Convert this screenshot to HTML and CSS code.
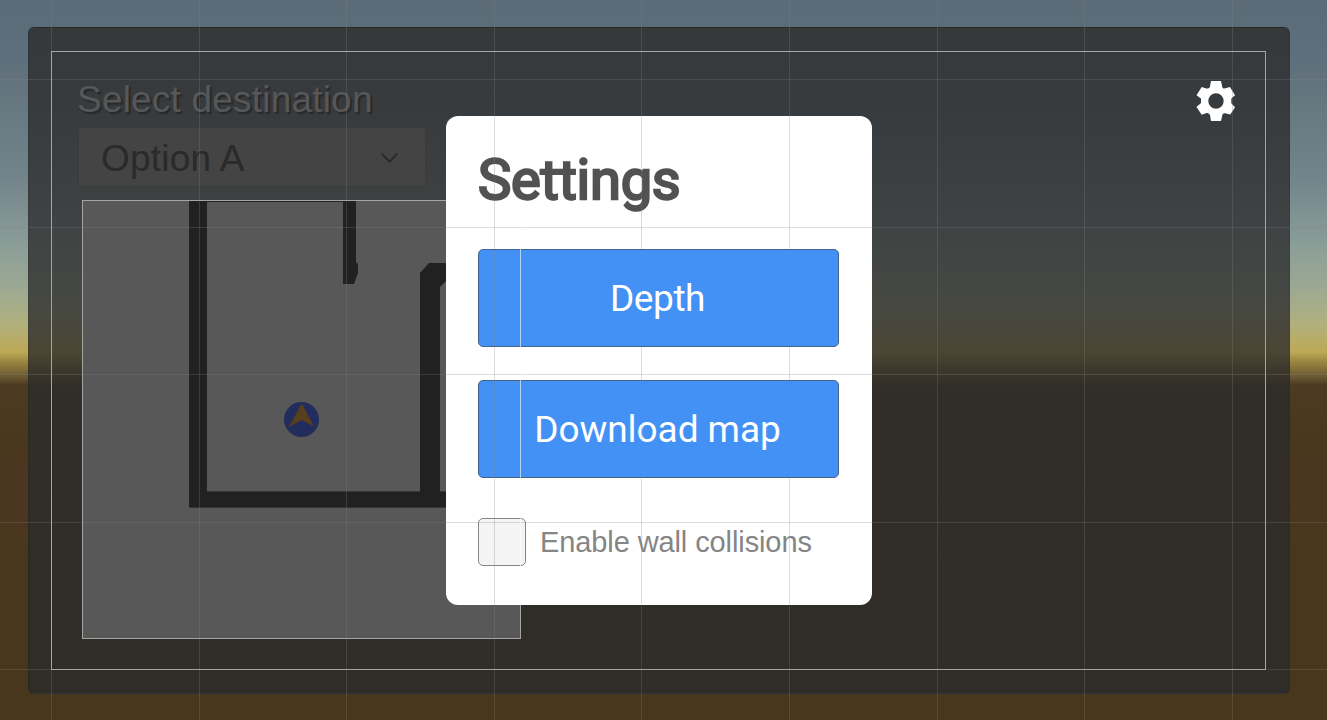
FILE: index.html
```
<!DOCTYPE html>
<html lang="en">
<head>
<meta charset="utf-8">
<title>Settings</title>
<link rel="stylesheet" href="styles.css">
</head>
<body>
<main class="scene">
  <section class="panel">
    <div class="destination">
      <h2 class="destination-label">Select destination</h2>
      <div class="dropdown">
        <span class="dropdown-value">Option A</span>
        <svg class="chevron" width="20" height="12" viewBox="0 0 20 12"><path d="M1.500 1.500 9.500 9.700 17.500 1.500" fill="none" stroke="#262626" stroke-width="1.700"/></svg>
      </div>
      <svg class="map" width="439" height="439" viewBox="0 0 439 439">
        <rect width="439" height="439" fill="#585858"/>
        <path fill="#212121" d="M107 1H274V62L276 64V73L272 84H261V2H125V291H338V73L347 63H439V81H364L358 87V291H439V308H107Z"/>
        <path d="M107 307.500H439M125 291.500H338M358 291.500H439" stroke="#363636" fill="none"/>
        <circle cx="219.500" cy="219.500" r="17.500" fill="#222d5d"/>
        <path fill="#58401f" d="M219.600 203.500 232 226.500 219.600 220 206.800 227Z"/>
        <rect x=".5" y=".5" width="438" height="438" fill="none" stroke="#a5a5a5"/>
      </svg>
    </div>
    <svg class="gear" width="40" height="42" viewBox="0 0 40 42">
      <path fill="#fff" fill-rule="evenodd" d="M15 1H25L26.300 7.300Q27 8.900 28.500 8.500L34 7 39 15.200 35.300 18.600V23.300L39 27.200 34.300 34.500 29 33.200Q27.500 32.800 26.500 34.600L25 41H15L14 35Q12.500 32.400 10.500 33L5.700 34.800.5 27 5 23V18.600L.5 15.200 5.700 7 9.500 8.200Q12.500 9.200 13.800 7.200ZM20 13.300A7.700 7.700 0 1 0 20 28.700 7.700 7.700 0 1 0 20 13.300Z"/>
    </svg>
  </section>

  <section class="dialog">
    <h1 class="dialog-title">Settings</h1>
    <button class="button">Depth</button>
    <button class="button button-wide-text">Download map</button>
    <label class="toggle"><span class="checkbox"></span><span class="toggle-label">Enable wall collisions</span></label>
  </section>

  <svg class="guides" width="1327" height="720" viewBox="0 0 1327 720">
    <path class="grid" d="M51.500 0V720M199.500 0V720M346.500 0V720M494.500 0V720M641.500 0V720M789.500 0V720M937.500 0V720M1084.500 0V720M1232.500 0V720M0 79.500H1327M0 227.500H1327M0 374.500H1327M0 522.500H1327M0 669.500H1327"/>
    <rect class="bounds" x="51.500" y="51.500" width="1214" height="618"/>
    <path class="edge" d="M520.500 227V605"/>
  </svg>
</main>
</body>
</html>
```
FILE: styles.css
```
* { box-sizing: border-box; }

body {
  margin: 0;
  font-family: "Liberation Sans", Arial, sans-serif;
}

.scene {
  position: relative;
  width: 1327px;
  height: 720px;
  padding: 27px 37px 26px 28px;
  overflow: hidden;
  background: linear-gradient(#5b6c78 0, #5d6e7c 50px, #65767f 100px, #73858b 180px, #8b9d98 245px, #9aa893 285px, #b0b080 322px, #bda955 352px, #9a853f 362px, #665532 378px, #4c3a22 385px, #49381d 440px, #4b361f 470px, #4b361f 510px, #48371d 550px, #48361d 720px);
}

.panel {
  display: flex;
  justify-content: space-between;
  width: 1262px;
  height: 667px;
  padding: 49px 53px 0 49px;
  border-radius: 6px;
  border: 1px solid rgba(30, 30, 30, .15);
  background: linear-gradient(#36393c 0, #383b3e 80px, #3c4041 160px, #414544 230px, #474840 285px, #4b4533 325px, #3e392c 340px, #312d27 360px, #312d29 450px, #302c26 530px, #302c27 667px);
}

.destination { width: 443px; }

.destination-label {
  height: 50px;
  margin: 0 0 0 -1px;
  font-size: 37px;
  font-weight: 400;
  line-height: 45px;
  letter-spacing: .2px;
  white-space: nowrap;
  color: #575757;
  text-shadow: 2px 2px 1px rgba(25, 25, 25, .55);
}

.dropdown {
  display: flex;
  align-items: center;
  justify-content: space-between;
  width: 348px;
  height: 60px;
  padding: 2px 25px 0 22px;
  border: 1px solid #3a3c3c;
  border-radius: 4px;
  background: #434443;
}

.dropdown-value {
  padding-top: 2px;
  font-size: 37px;
  line-height: 58px;
  letter-spacing: .2px;
  color: #2a2a2a;
}

.map {
  display: block;
  margin: 13px 0 0 4px;
}

.gear { margin-top: 3px; }

.dialog {
  position: absolute;
  left: 446px;
  top: 116px;
  width: 426px;
  height: 489px;
  padding: 32px 33px 39px 32px;
  border-radius: 12px;
  background: #fff;
}

.dialog-title {
  height: 101px;
  margin: 0;
  font: 400 56px/64px Roboto, sans-serif;
  letter-spacing: -.25px;
  color: #525252;
  -webkit-text-stroke: 2.4px #525252;
}

.button {
  display: flex;
  align-items: center;
  justify-content: center;
  width: 361px;
  height: 98px;
  margin: 0 0 33px;
  padding: 2px 2px 0 0;
  border: 1px solid #42648f;
  border-radius: 5px;
  background: #4491f6;
  color: #fff;
  font: 400 37px/44px Roboto, sans-serif;
  letter-spacing: -.4px;
}

.button-wide-text { letter-spacing: -.05px; }

.toggle {
  display: flex;
  align-items: center;
  gap: 14px;
  padding-top: 7px;
}

.checkbox {
  width: 48px;
  height: 48px;
  border: 1px solid #858585;
  border-radius: 5px;
  background: #f4f4f4;
}

.toggle-label {
  font-size: 29px;
  line-height: 48px;
  letter-spacing: -.1px;
  white-space: nowrap;
  color: #858585;
}

.guides {
  position: absolute;
  left: 0;
  top: 0;
  fill: none;
}

.grid { stroke: rgba(128, 128, 128, .28); }
.bounds { stroke: #a4a6a6; }
.edge { stroke: rgba(255, 255, 255, .6); }
```
